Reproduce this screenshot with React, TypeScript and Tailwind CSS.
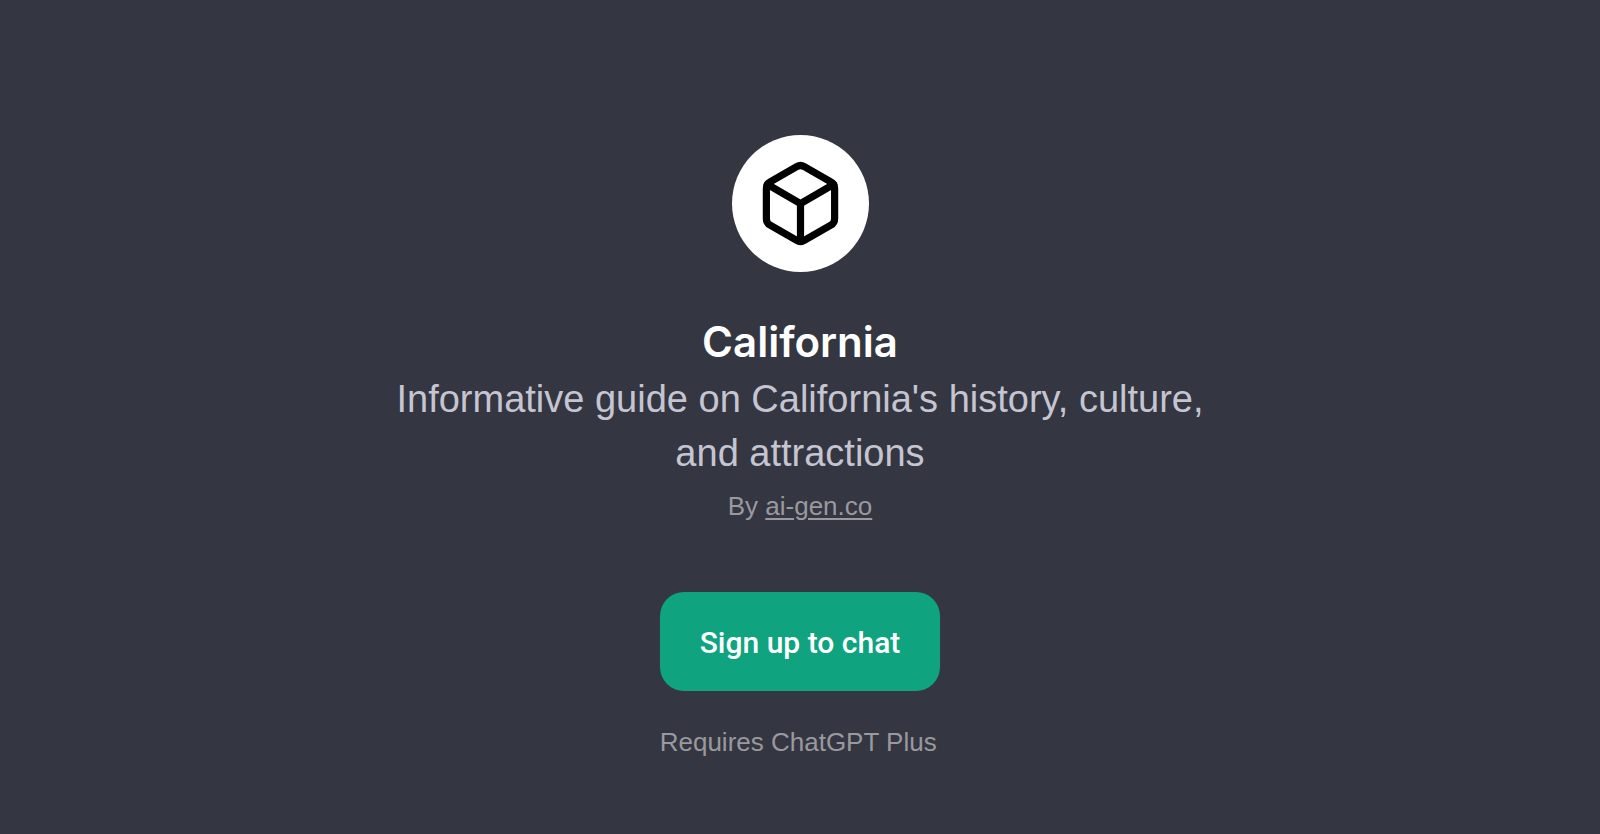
import React from 'react';

interface GptInfo {
  name: string;
  description: string;
  author: string;
  authorUrl: string;
}

const gpt: GptInfo = {
  name: 'California',
  description: "Informative guide on California's history, culture, and attractions",
  author: 'ai-gen.co',
  authorUrl: 'https://ai-gen.co',
};

const CubeIcon: React.FC = () => (
  <svg
    viewBox="0 0 24 24"
    fill="none"
    stroke="currentColor"
    strokeWidth="1.9"
    strokeLinecap="round"
    strokeLinejoin="round"
    className="h-[91px] w-[91px]"
    aria-hidden="true"
  >
    <path d="M21 16V8a2 2 0 0 0-1-1.73l-7-4a2 2 0 0 0-2 0l-7 4A2 2 0 0 0 3 8v8a2 2 0 0 0 1 1.73l7 4a2 2 0 0 0 2 0l7-4A2 2 0 0 0 21 16z" />
    <path d="M3.27 6.96 12 12.01l8.73-5.05" />
    <path d="M12 22V12" />
  </svg>
);

const App: React.FC = () => {
  return (
    <main className="flex min-h-screen flex-col items-center bg-[#343641] px-6 pt-[135px] pb-16 text-center font-['Liberation_Sans',sans-serif]">
      <div className="flex h-[137px] w-[137px] items-center justify-center rounded-full bg-white text-black">
        <CubeIcon />
      </div>
      <h1 className="mt-10 font-['Inter',sans-serif] text-[42px] leading-[60px] font-semibold text-white">{gpt.name}</h1>
      <p className="max-w-[860px] text-[38px] leading-[54px] text-[#c5c5d2]">{gpt.description}</p>
      <p className="text-[26px] leading-[52px] text-[#99999f]">
        By{' '}
        <a href={gpt.authorUrl} className="underline underline-offset-3">
          {gpt.author}
        </a>
      </p>
      <div className="mt-[60px] flex flex-col items-start">
        <button
          type="button"
          className="rounded-3xl bg-[#10a37f] px-10 pt-[33px] pb-[30px] font-['Roboto',sans-serif] text-[30px] leading-9 font-medium text-white"
        >
          Sign up to chat
        </button>
        <p className="mt-[33px] text-[26px] leading-9 text-[#99999f]">Requires ChatGPT Plus</p>
      </div>
    </main>
  );
};

export default App;
